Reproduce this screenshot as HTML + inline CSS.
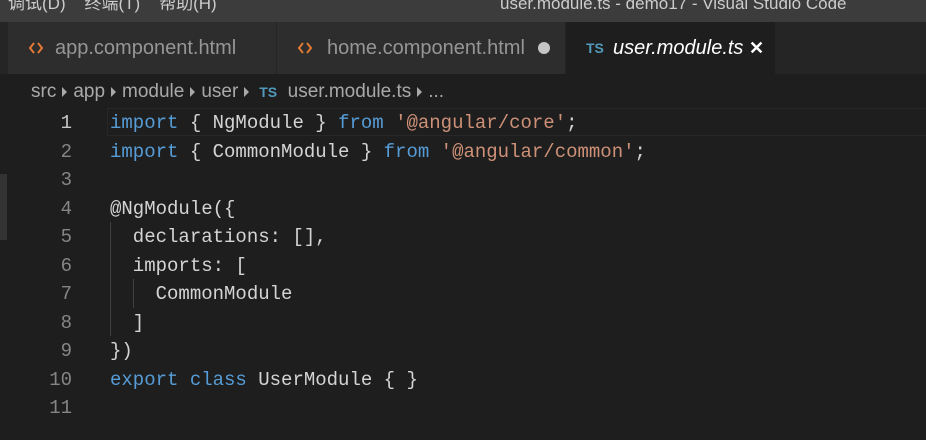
<!DOCTYPE html>
<html><head><meta charset="utf-8"><style>
body{margin:0;width:926px;height:440px;overflow:hidden;background:#1e1e1e;font-family:"Liberation Sans","Noto Sans CJK SC",sans-serif;position:relative}
.title{position:absolute;left:0;top:0;width:926px;height:22px;background:#3c3c3c;color:#ccc;font-size:17px;line-height:8px;overflow:hidden}
.tabs{position:absolute;left:0;top:22px;width:926px;height:52px;background:#252526}
.tab{position:absolute;top:0;height:52px;background:#2d2d2d;color:#969696;font-size:20px;line-height:52px;white-space:nowrap}
.crumb{position:absolute;left:4px;top:74px;width:922px;height:34px;background:#1e1e1e;color:#a9a9a9;font-size:19px;line-height:36px;white-space:nowrap}
.code{position:absolute;left:0;top:111px;font-family:"Liberation Mono",monospace;font-size:19px;white-space:pre;color:#d4d4d4}
.ln{position:absolute;width:72px;text-align:right;color:#858585}
.l{position:absolute;left:110px}
.k{color:#569cd6}.s{color:#ce9178}
.g{position:absolute;width:1px;background:#404040}
.ar{display:inline-block;width:0;height:0;border-left:5px solid #a9a9a9;border-top:5px solid transparent;border-bottom:5px solid transparent;margin:0 6px 0 6px;vertical-align:0}
</style></head><body>
<div class="title"><span style="position:absolute;left:8px;top:0">调试(D)&nbsp;&nbsp;&nbsp;&nbsp;终端(T)&nbsp;&nbsp;&nbsp;&nbsp;帮助(H)</span><span style="position:absolute;left:500px;top:0">user.module.ts - demo17 - Visual Studio Code</span></div>
<div class="tabs">
<div class="tab" style="left:8px;width:268px"><svg style="position:absolute;left:20px;top:19px" width="16" height="14" viewBox="0 0 16 14"><path d="M6 2L2 7l4 5M10 2l4 5-4 5" stroke="#e37933" stroke-width="2" fill="none"/></svg><span style="position:absolute;left:47px">app.component.html</span></div>
<div class="tab" style="left:277px;width:288px"><svg style="position:absolute;left:20px;top:19px" width="16" height="14" viewBox="0 0 16 14"><path d="M6 2L2 7l4 5M10 2l4 5-4 5" stroke="#e37933" stroke-width="2" fill="none"/></svg><span style="position:absolute;left:50px">home.component.html</span><span style="position:absolute;left:261px;top:20px;width:12px;height:12px;border-radius:6px;background:#c5c5c5"></span></div>
<div class="tab" style="left:566px;width:209px;background:#1e1e1e;color:#fff"><span style="color:#519aba;position:absolute;left:20px;font-size:14px;font-weight:bold">TS</span><span style="position:absolute;left:47px;font-style:italic">user.module.ts</span><span style="position:absolute;left:183px;font-size:18px;font-weight:bold">✕</span></div>
</div>
<div class="crumb"><span style="position:absolute;left:27px">src<i class="ar"></i>app<i class="ar"></i>module<i class="ar"></i>user<i class="ar"></i><span style="color:#519aba;font-size:14px;font-weight:bold">&nbsp;TS</span>&nbsp; user.module.ts<i class="ar"></i>...</span></div>
<div style="position:absolute;left:0;top:174px;width:7px;height:66px;background:#333"></div>
<div style="position:absolute;left:107px;top:108px;width:819px;height:26px;border:1px solid #282828"></div>
<div class="g" style="left:110px;top:222px;height:114px"></div>
<div class="g" style="left:133px;top:279px;height:29px"></div>
<div class="code">
<div class="ln" style="top:1px;color:#c6c6c6">1</div><div class="l" style="top:1px"><span class="k">import</span> { NgModule } <span class="k">from</span> <span class="s">'@angular/core'</span>;</div>
<div class="ln" style="top:29.5px">2</div><div class="l" style="top:29.5px"><span class="k">import</span> { CommonModule } <span class="k">from</span> <span class="s">'@angular/common'</span>;</div>
<div class="ln" style="top:58px">3</div>
<div class="ln" style="top:86.5px">4</div><div class="l" style="top:86.5px">@NgModule({</div>
<div class="ln" style="top:115px">5</div><div class="l" style="top:115px">  declarations: [],</div>
<div class="ln" style="top:143.5px">6</div><div class="l" style="top:143.5px">  imports: [</div>
<div class="ln" style="top:172px">7</div><div class="l" style="top:172px">    CommonModule</div>
<div class="ln" style="top:200.5px">8</div><div class="l" style="top:200.5px">  ]</div>
<div class="ln" style="top:229px">9</div><div class="l" style="top:229px">})</div>
<div class="ln" style="top:257.5px">10</div><div class="l" style="top:257.5px"><span class="k">export</span> <span class="k">class</span> UserModule { }</div>
<div class="ln" style="top:286px">11</div>
</div>
</body></html>
